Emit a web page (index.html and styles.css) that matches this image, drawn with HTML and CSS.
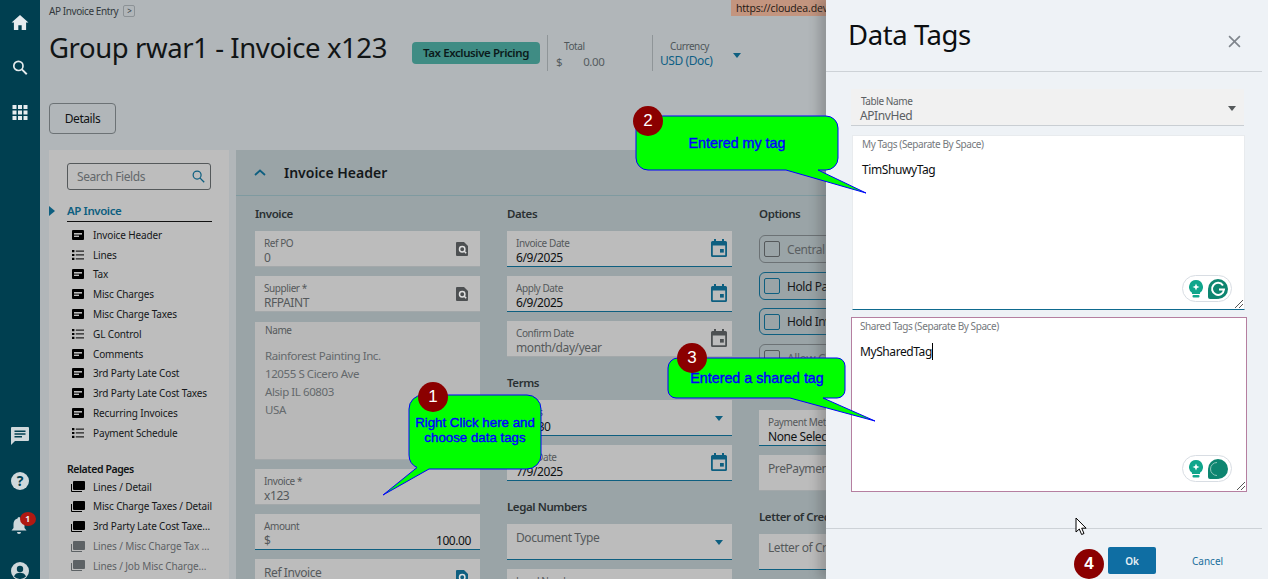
FILE: index.html
```html
<!DOCTYPE html>
<html lang="en">
<head>
<meta charset="utf-8">
<title>AP Invoice Entry</title>
<link rel="stylesheet" href="styles.css">
</head>
<body>
<svg class="sprite" width="0" height="0" aria-hidden="true">
  <symbol id="i-card" viewBox="0 0 12 10"><rect width="12" height="10" rx="1" fill="#000"/><rect x="2" y="3" width="8" height="1.6" fill="#bdbdbd"/><rect x="2" y="5.6" width="5" height="1.4" fill="#bdbdbd"/></symbol>
  <symbol id="i-list" viewBox="0 0 12 10"><path d="M0 0h2.4v2.2H0zM0 3.9h2.4v2.2H0zM0 7.8h2.4V10H0z" fill="#000"/><path d="M3.800 .4H12v1.300H3.800zM3.800 4.300H12v1.300H3.800zM3.800 8.200H12v1.300H3.800z" fill="#222"/></symbol>
  <symbol id="i-stack" viewBox="0 0 14 11"><path d="M0 3h1v7h10v1H1a1 1 0 0 1-1-1z" fill="currentColor"/><rect x="2" y="0" width="12" height="9" rx="1" fill="currentColor"/></symbol>
  <symbol id="i-lookup" viewBox="0 0 12 14"><path d="M0 1a1 1 0 0 1 1-1h7l4 4v9a1 1 0 0 1-1 1H1a1 1 0 0 1-1-1z" fill="currentColor"/><circle cx="6.200" cy="7.200" r="2.700" fill="none" stroke="#e0e0e0" stroke-width="1.500"/><path d="M8 9l2.200 2.200" stroke="#e0e0e0" stroke-width="1.500"/></symbol>
  <symbol id="i-cal" viewBox="0 0 16 18"><path d="M3 0h2v2h6V0h2v2h1.500A1.500 1.500 0 0 1 16 3.500v13a1.500 1.500 0 0 1-1.500 1.500h-13A1.500 1.500 0 0 1 0 16.500v-13A1.500 1.500 0 0 1 1.500 2H3zM1.800 6.500v9.700h12.400V6.500z" fill="currentColor"/><rect x="9" y="10" width="3.800" height="3.600" fill="currentColor"/></symbol>
  <symbol id="i-bulb" viewBox="0 0 14 18"><path d="M7 0a7 7 0 0 1 4 12.700V14H3v-1.300A7 7 0 0 1 7 0z" fill="#10a68c"/><path d="M7 3.500l1 2.500 2.500 1-2.500 1-1 2.500-1-2.500-2.500-1 2.500-1z" fill="#fff"/><rect x="3.500" y="15" width="7" height="2.400" rx="1" fill="#10a68c"/></symbol>
</svg>

<div class="app">
  <nav class="rail">
    <div class="rail-top">
      <svg class="rail-icon rail-icon-sm" viewBox="0 0 18 16"><path d="M9 0L0 8h2.500v8h4.700v-5.200h3.600V16h4.700V8H18z" fill="#e6ecee"/></svg>
      <svg class="rail-icon rail-icon-sm" viewBox="0 0 16 16"><circle cx="6.300" cy="6.300" r="4.900" fill="none" stroke="#e6ecee" stroke-width="1.800"/><path d="M10 10l5.200 5.200" stroke="#e6ecee" stroke-width="2"/></svg>
      <svg class="rail-icon rail-icon-sm" viewBox="0 0 15 15"><path d="M0 0h4v4H0zM5.500 0h4v4h-4zM11 0h4v4h-4zM0 5.500h4v4H0zM5.500 5.500h4v4h-4zM11 5.500h4v4h-4zM0 11h4v4H0zM5.500 11h4v4h-4zM11 11h4v4h-4z" fill="#e6ecee"/></svg>
    </div>
    <div class="rail-bottom">
      <svg class="rail-icon" viewBox="0 0 18 18"><path d="M1 0h16a1 1 0 0 1 1 1v12a1 1 0 0 1-1 1H4l-4 4V1a1 1 0 0 1 1-1z" fill="#cfd8db"/><path d="M3.500 3.500h11v1.500h-11zM3.500 6.300h11v1.500h-11zM3.500 9.100h7.500v1.500h-7.500z" fill="#003f50"/></svg>
      <svg class="rail-icon" viewBox="0 0 18 18"><circle cx="9" cy="9" r="9" fill="#cfd8db"/><text x="9" y="14" class="help-mark">?</text></svg>
      <div class="bell">
        <svg class="rail-icon" viewBox="0 0 16 18"><path d="M8 0a1.500 1.500 0 0 1 1.500 1.500c2.700.7 4 3 4 5.500v4l2 2.500H.500l2-2.500V7c0-2.500 1.300-4.800 4-5.500A1.500 1.500 0 0 1 8 0zM6 15h4a2 2 0 0 1-4 0z" fill="#cfd8db"/></svg>
        <span class="bell-count">1</span>
      </div>
      <svg class="rail-icon" viewBox="0 0 18 18"><circle cx="9" cy="9" r="9" fill="#cfd8db"/><circle cx="9" cy="7" r="3.200" fill="#003f50"/><path d="M3 14.500c1-2.800 3.300-3.800 6-3.800s5 1 6 3.800A8 8 0 0 1 9 17a8 8 0 0 1-6-2.500z" fill="#003f50"/></svg>
    </div>
  </nav>

  <main class="page">
    <div class="crumbs"><span>AP Invoice Entry</span><span class="crumb-btn">&gt;</span></div>
    <header class="head">
      <h1 class="title">Group rwar1 - Invoice x123</h1>
      <span class="pill">Tax Exclusive Pricing</span>
      <div class="stat stat-total">
        <span class="stat-label">Total</span>
        <span class="stat-value"><span>$</span><span>0.00</span></span>
      </div>
      <div class="stat stat-currency">
        <span class="stat-label">Currency</span>
        <span class="stat-link">USD (Doc)</span>
        <span class="caret caret-head"></span>
      </div>
    </header>
    <div class="actions"><button class="details">Details</button></div>

    <div class="workspace">
      <aside class="side">
        <div class="search"><span>Search Fields</span>
          <svg class="search-icon" viewBox="0 0 16 16"><circle cx="6.300" cy="6.300" r="4.900" fill="none" stroke="#0e5f80" stroke-width="1.500"/><path d="M10 10l5 5" stroke="#0e5f80" stroke-width="1.700"/></svg>
        </div>
        <div class="side-head"><span class="side-arrow"></span>AP Invoice</div>
        <ul class="side-list">
          <li><svg class="n-ic"><use href="#i-card"/></svg>Invoice Header</li>
          <li><svg class="n-ic"><use href="#i-list"/></svg>Lines</li>
          <li><svg class="n-ic"><use href="#i-card"/></svg>Tax</li>
          <li><svg class="n-ic"><use href="#i-card"/></svg>Misc Charges</li>
          <li><svg class="n-ic"><use href="#i-card"/></svg>Misc Charge Taxes</li>
          <li><svg class="n-ic"><use href="#i-list"/></svg>GL Control</li>
          <li><svg class="n-ic"><use href="#i-card"/></svg>Comments</li>
          <li><svg class="n-ic"><use href="#i-card"/></svg>3rd Party Late Cost</li>
          <li><svg class="n-ic"><use href="#i-card"/></svg>3rd Party Late Cost Taxes</li>
          <li><svg class="n-ic"><use href="#i-card"/></svg>Recurring Invoices</li>
          <li><svg class="n-ic"><use href="#i-list"/></svg>Payment Schedule</li>
        </ul>
        <div class="related">Related Pages</div>
        <ul class="side-list">
          <li><svg class="n-ic n-stack"><use href="#i-stack"/></svg>Lines / Detail</li>
          <li><svg class="n-ic n-stack"><use href="#i-stack"/></svg>Misc Charge Taxes / Detail</li>
          <li><svg class="n-ic n-stack"><use href="#i-stack"/></svg>3rd Party Late Cost Taxe…</li>
          <li class="muted"><svg class="n-ic n-stack"><use href="#i-stack"/></svg>Lines / Misc Charge Tax …</li>
          <li class="muted"><svg class="n-ic n-stack"><use href="#i-stack"/></svg>Lines / Job Misc Charge…</li>
        </ul>
      </aside>

      <section class="panel">
        <div class="panel-head">
          <svg class="chev" viewBox="0 0 12 7"><path d="M1 6l5-4.500L11 6" fill="none" stroke="#0e5f80" stroke-width="1.800"/></svg>
          <h2>Invoice Header</h2>
        </div>
        <div class="form">
          <div class="col">
            <h3>Invoice</h3>
            <div class="field"><label>Ref PO</label><div class="val dim">0</div><svg class="f-ic"><use href="#i-lookup"/></svg></div>
            <div class="field"><label>Supplier *</label><div class="val dim">RFPAINT</div><svg class="f-ic"><use href="#i-lookup"/></svg></div>
            <div class="field field-name">
              <label>Name</label>
              <div class="addr">Rainforest Painting Inc.<br>12055 S Cicero Ave<br>Alsip IL 60803<br>USA</div>
            </div>
            <div class="field"><label>Invoice *</label><div class="val dim">x123</div></div>
            <div class="field live"><label>Amount</label><div class="val amount"><span class="dim">$</span><span>100.00</span></div></div>
            <div class="field"><div class="ph">Ref Invoice</div><svg class="f-ic f-ic-live"><use href="#i-lookup"/></svg></div>
          </div>
          <div class="col">
            <h3>Dates</h3>
            <div class="field live"><label>Invoice Date</label><div class="val">6/9/2025</div><svg class="f-cal"><use href="#i-cal"/></svg></div>
            <div class="field live"><label>Apply Date</label><div class="val">6/9/2025</div><svg class="f-cal"><use href="#i-cal"/></svg></div>
            <div class="field"><label>Confirm Date</label><div class="val dim">month/day/year</div><svg class="f-cal f-cal-off"><use href="#i-cal"/></svg></div>
            <h3 class="sec">Terms</h3>
            <div class="field live"><label>Terms</label><div class="val">Net 30</div><span class="caret caret-field"></span></div>
            <div class="field live"><label>Due Date</label><div class="val">7/9/2025</div><svg class="f-cal"><use href="#i-cal"/></svg></div>
            <h3 class="sec">Legal Numbers</h3>
            <div class="field live"><div class="ph">Document Type</div><span class="caret caret-field"></span></div>
            <div class="field"><label>Legal Number</label></div>
          </div>
          <div class="col">
            <h3>Options</h3>
            <div class="check"><span class="box"></span>Central Collection</div>
            <div class="check on"><span class="box"></span>Hold Payment</div>
            <div class="check on"><span class="box"></span>Hold Invoice</div>
            <div class="check"><span class="box"></span>Allow Changes</div>
            <div class="field live pay"><label>Payment Method</label><div class="val">None Selected</div></div>
            <div class="field"><div class="ph">PrePayment</div></div>
            <h3 class="sec">Letter of Credit</h3>
            <div class="field live"><div class="ph">Letter of Credit</div></div>
          </div>
        </div>
      </section>
    </div>
  </main>
</div>

<div class="url-tip">https://cloudea.dev.epicorsaas.com</div>

<aside class="drawer">
  <div class="d-head">
    <h2>Data Tags</h2>
    <svg class="d-close" viewBox="0 0 12 12"><path d="M1 1l10 10M11 1L1 11" stroke="#7f858c" stroke-width="1.500"/></svg>
  </div>
  <div class="d-body">
    <div class="d-select"><label>Table Name</label><div>APInvHed</div><span class="caret caret-drawer"></span></div>
    <div class="d-area d-mine">
      <label>My Tags (Separate By Space)</label>
      <div class="d-text">TimShuwyTag</div>
      <div class="gram">
        <svg class="g-bulb"><use href="#i-bulb"/></svg>
        <svg class="g-mark" viewBox="0 0 20 20"><circle cx="10" cy="10" r="10" fill="#0d8570"/><path d="M10 20H2a2 2 0 0 1-2-2v-8z" fill="#0d8570"/><path d="M15 6.500A6 6 0 1 0 16 10.500h-5" fill="none" stroke="#fff" stroke-width="2"/></svg>
      </div>
      <span class="grip"></span>
    </div>
    <div class="d-area d-shared">
      <label>Shared Tags (Separate By Space)</label>
      <div class="d-text"><span class="d-caret">MySharedTag</span></div>
      <div class="gram">
        <svg class="g-bulb"><use href="#i-bulb"/></svg>
        <svg class="g-mark" viewBox="0 0 20 20"><circle cx="10" cy="10" r="10" fill="#0d8570"/><path d="M10 20H2a2 2 0 0 1-2-2v-8z" fill="#0d8570"/><path d="M9 3.500a6.500 6.500 0 0 0 0 13" fill="none" stroke="#8fc7bb" stroke-width="1"/></svg>
      </div>
      <span class="grip"></span>
    </div>
  </div>
  <div class="d-foot">
    <button class="ok">Ok</button>
    <button class="cancel">Cancel</button>
  </div>
</aside>

<svg class="bubble-art" viewBox="0 0 1268 579" width="1268" height="579" aria-hidden="true">
  <path class="bubble" d="M423 395H527a14 14 0 0 1 14 14V455a14 14 0 0 1-14 14H429L383 495L417 467.500A14 14 0 0 1 409 455V409a14 14 0 0 1 14-14z"/>
  <path class="bubble" d="M648 116H826a12 12 0 0 1 12 12V158a12 12 0 0 1-12 12H818L866 193L786 170H648a12 12 0 0 1-12-12V128a12 12 0 0 1 12-12z"/>
  <path class="bubble" d="M678 358H837a8 8 0 0 1 8 8V390a8 8 0 0 1-8 8H823L875 421L790 398H676a8 8 0 0 1-8-8V368a10 10 0 0 1 10-10z"/>
</svg>
<div class="note note-1">Right Click here and choose data tags</div>
<div class="note note-2">Entered my tag</div>
<div class="note note-3">Entered a shared tag</div>
<span class="step step-1">1</span>
<span class="step step-2">2</span>
<span class="step step-3">3</span>
<span class="step step-4">4</span>
<svg class="pointer" viewBox="0 0 12 19"><path d="M1 1v14l3.300-3 2.300 5.500 2.400-1-2.300-5.300h4.400z" fill="#fff" stroke="#000" stroke-width="1"/></svg>
</body>
</html>
```
FILE: styles.css
```css
* { box-sizing: border-box; }
html, body { margin: 0; padding: 0; height: 579px; overflow: hidden; }
body { font-family: "Noto Sans", sans-serif; letter-spacing: -.026em; color: #0c0f10; background: #b1b6b9; position: relative; width: 1268px; }
ul { list-style: none; margin: 0; padding: 0; }
h1, h2, h3 { margin: 0; font-weight: 400; }
label { display: block; }
button { font-family: inherit; letter-spacing: inherit; }
.sprite { position: absolute; }

.app { display: flex; height: 579px; overflow: hidden; }
.rail { width: 40px; flex: none; background: #003f50; display: flex; flex-direction: column; justify-content: space-between; align-items: center; padding: 15px 0 0; }
.rail-top { display: flex; flex-direction: column; align-items: center; gap: 30px; }
.rail-bottom { display: flex; flex-direction: column; align-items: center; gap: 27px; margin-bottom: -1px; }
.rail-icon { width: 18px; height: 18px; display: block; }
.rail-icon-sm { height: 15px; }
.help-mark { font: 700 14px "Noto Sans", sans-serif; fill: #003f50; text-anchor: middle; }
.bell { position: relative; margin-right: 3px; }
.bell-count { position: absolute; left: 10px; top: -5px; width: 16px; height: 14px; border-radius: 50%; background: #b01912; color: #eee; font-size: 8.500px; font-weight: 700; line-height: 14px; text-align: center; }

.page { flex: 1; min-width: 0; padding-left: 9px; }
.crumbs { display: flex; align-items: center; gap: 5px; height: 21px; font-size: 10px; color: #33393c; }
.crumb-btn { width: 12px; height: 12px; border: 1px solid #8c9296; border-radius: 2px; font-size: 8px; line-height: 10px; text-align: center; }
.head { display: flex; align-items: flex-start; height: 82px; }
.title { font-size: 27.500px; line-height: 40px; color: #111516; width: 363px; flex: none; margin-top: 7px; white-space: nowrap; }
.pill { margin-top: 21px; width: 128px; height: 22px; flex: none; background: #3f8c84; border-radius: 4px; font-size: 11.500px; font-weight: 600; line-height: 22px; text-align: center; color: #0b1a1b; white-space: nowrap; }
.stat { margin-top: 14px; height: 36px; border-left: 1px solid #8f9598; display: flex; flex-direction: column; position: relative; flex: none; }
.stat-total { margin-left: 7px; width: 105px; padding-left: 8px; }
.stat-label { font-size: 10px; line-height: 12px; color: #4f5659; padding-left: 8px; margin-top: 5px; }
.stat-value { display: flex; gap: 21px; font-size: 11.500px; line-height: 16px; color: #555c60; margin-top: 2px; }
.stat-currency { width: 90px; padding-left: 7px; }
.stat-currency .stat-label { padding-left: 10px; }
.stat-link { font-size: 12px; line-height: 16px; color: #0f5f85; margin-top: 1px; white-space: nowrap; }
.caret { position: absolute; width: 0; height: 0; border-left: 4.500px solid transparent; border-right: 4.500px solid transparent; border-top: 5px solid #0e5f80; }
.caret-head { left: 80px; top: 18px; }
.actions { height: 47px; }
.details { width: 67px; height: 31px; background: transparent; border: 1px solid #6c7275; border-radius: 4px; font-size: 12px; color: #0f1214; padding: 0; }

.workspace { display: flex; gap: 7px; height: 429px; overflow: hidden; }
.side { width: 180px; flex: none; background: #bdbdbd; padding: 13px 0 0 18px; position: relative; }
.search { width: 144px; height: 27px; border: 1px solid #55595b; border-radius: 3px; font-size: 12px; line-height: 25px; color: #63686b; padding-left: 9px; position: relative; }
.search-icon { position: absolute; right: 5px; top: 6px; width: 13px; height: 13px; }
.side-head { margin-top: 11px; width: 145px; height: 21px; border-bottom: 1px solid #111; font-size: 11.500px; font-weight: 600; line-height: 20px; color: #0e5f80; position: relative; }
.side-arrow { position: absolute; left: -18px; top: 5px; border-top: 5.500px solid transparent; border-bottom: 5.500px solid transparent; border-left: 6px solid #0e5f80; }
.side-list li { height: 19.800px; display: flex; align-items: center; gap: 9px; font-size: 10px; letter-spacing: -.014em; color: #15181a; white-space: nowrap; padding-left: 5px; }
.side-head + .side-list { margin-top: 3px; }
.side-list .muted { color: #5d6265; }
.n-ic { width: 12px; height: 10px; flex: none; color: #000; }
.n-stack { width: 14px; height: 11px; margin-left: -1px; margin-right: -1px; }
.muted .n-stack { color: #5d6265; }
.related { margin-top: 19px; font-size: 10.500px; font-weight: 600; line-height: 15px; color: #101314; }
.related + .side-list { margin-top: 0; }

.panel { flex: 1; min-width: 0; background: #9aa4a7; overflow: hidden; }
.panel-head { height: 46px; border-bottom: 1px solid #7f9aa0; display: flex; align-items: center; padding-left: 18px; }
.panel-head h2 { font-size: 14px; font-weight: 600; color: #14181a; margin-left: 18px; letter-spacing: 0; }
.chev { width: 12px; height: 7px; }
.form { display: grid; grid-template-columns: 225px 225px 225px; column-gap: 27px; padding: 9px 0 0 19px; }
.col h3 { font-size: 11.500px; font-weight: 600; line-height: 17px; height: 17px; margin: 0 0 9px; color: #2a3032; }
.col h3.sec { margin-top: 17px; }
.field { position: relative; height: 36px; background: #bcbcbc; margin-bottom: 9px; padding: 6px 9px 0; border-bottom: 1px solid #a3a8aa; }
.field.live { border-bottom-color: #0e5f80; }
.field label { font-size: 10px; line-height: 13px; color: #55595b; white-space: nowrap; }
.val { font-size: 12px; line-height: 15px; margin-top: 0; color: #0e1113; white-space: nowrap; }
.val.dim, .dim { color: #55595b; }
.amount { display: flex; justify-content: space-between; }
.ph { font-size: 12px; line-height: 16px; color: #55595b; white-space: nowrap; }
.field-name { height: 138px; background: #b8b8b8; margin-top: 10px; padding: 2px 10px 0; }
.addr { margin-top: 10px; font-size: 11.500px; line-height: 18px; color: #64696c; }
.f-ic { position: absolute; right: 12px; top: 11px; width: 12px; height: 14px; color: #4d5052; }
.f-ic-live { color: #0e5f80; }
.f-cal { position: absolute; right: 5px; top: 8px; width: 16px; height: 18px; color: #0e5f80; }
.f-cal-off { color: #4d5052; }
.caret-field { right: 9px; top: 16px; }

.check { height: 28px; margin-bottom: 8px; border: 1px solid #6c7275; border-radius: 6px; display: flex; align-items: center; gap: 7px; padding-left: 4px; font-size: 12px; color: #5a5f62; white-space: nowrap; }
.col h3 + .check { margin-top: 13px; margin-bottom: 9px; }
.check.on { border-color: #0e5f80; color: #15181a; }
.check.on + .check.on { height: 27px; margin-bottom: 9px; }
.box { width: 16px; height: 16px; border: 1px solid #55595b; border-radius: 2px; flex: none; }
.check.on .box { border-color: #0e5f80; }
.pay { margin-top: 38px; height: 36px; }

.url-tip { position: absolute; left: 731px; top: 0; width: 95px; height: 16px; overflow: hidden; background: #c3957f; font-family: "Open Sans", sans-serif; letter-spacing: -.015em; font-size: 10.500px; line-height: 16px; padding-left: 5px; color: #1c1512; white-space: nowrap; }

.drawer { position: absolute; left: 826px; top: 0; width: 442px; height: 579px; background: #eef2f6; box-shadow: -7px 0 10px rgba(60, 60, 60, .28); }
.d-head { height: 72px; margin-right: 6px; border-bottom: 1px solid #cdd2d7; display: flex; justify-content: space-between; padding: 14px 22px 0 22px; }
.d-head h2 { font-size: 27.500px; line-height: 42px; color: #0b0e10; }
.d-close { width: 13px; height: 13px; margin-top: 21px; margin-right: -1px; }
.d-body { height: 456px; padding: 17px 0 0 25px; display: flex; flex-direction: column; }
.d-select { width: 393px; height: 37px; background: #f1f1f1; border-bottom: 1px solid #c9ced3; padding: 6px 9px 0; position: relative; color: #5b6063; }
.d-select label { font-size: 10px; line-height: 13px; padding-left: 1px; }
.d-select div { font-size: 12px; line-height: 15px; }
.caret-drawer { right: 8px; top: 17px; border-top-color: #55595b; }
.d-area { position: relative; background: #fff; height: 175px; flex: none; }
.d-area label { font-size: 10px; line-height: 14px; color: #75797d; display: block; }
.d-text { font-size: 12px; line-height: 16px; margin-top: 11px; color: #0b0e10; }
.d-mine { width: 393px; margin: 9px 0 0 1px; border: 1px solid #e8ebee; border-bottom: 1px solid #0e6a8f; padding: 1px 9px; }
.d-shared { width: 396px; margin: 7px 0 0 0; border: 1px solid #b57fa0; padding: 1px 8px; }
.d-caret { border-right: 1px solid #000; }
.gram { position: absolute; right: 14px; bottom: 9px; width: 50px; height: 27px; border: 1px solid #d8dde3; border-radius: 14px; background: #fff; display: flex; align-items: center; gap: 5px; padding-left: 6px; }
.d-mine .gram { right: 12px; bottom: 7px; }
.g-bulb { width: 14px; height: 18px; }
.g-mark { width: 20px; height: 20px; }
.grip { position: absolute; right: 1px; bottom: 1px; width: 8px; height: 8px; background: linear-gradient(135deg, transparent 48%, #555 48%, #555 56%, transparent 56%, transparent 70%, #555 70%, #555 78%, transparent 78%); }
.d-foot { margin-right: 6px; border-top: 1px solid #cdd2d7; height: 51px; display: flex; align-items: flex-start; padding: 18px 0 0 282px; }
.ok { width: 48px; height: 27px; background: #0f6ea3; border: 0; border-radius: 2px; color: #e8f0f5; font-size: 10px; font-weight: 600; padding: 0; letter-spacing: 0; }
.cancel { background: none; border: 0; color: #1a6f9c; font-size: 10px; margin-left: 36px; padding: 0; height: 27px; letter-spacing: 0; }

.bubble-art { position: absolute; left: 0; top: 0; pointer-events: none; }
.bubble { fill: #00ff00; stroke: #0000ff; stroke-width: 1px; }
.note { position: absolute; font-family: "Liberation Sans", sans-serif; font-size: 14.300px; line-height: 15px; letter-spacing: 0; color: #0000ff; text-align: center; -webkit-text-stroke: .4px #0000ff; }
.note-1 { left: 410px; top: 415px; width: 130px; font-size: 13.300px; }
.note-2 { left: 636px; top: 136px; width: 202px; }
.note-3 { left: 668px; top: 371px; width: 178px; }
.step { position: absolute; width: 30px; height: 30px; border-radius: 50%; background: #8b0000; color: #fff; font-family: "Liberation Sans", sans-serif; font-size: 17px; line-height: 30px; letter-spacing: 0; text-align: center; }
.step-1 { left: 418px; top: 382px; }
.step-2 { left: 633px; top: 106px; }
.step-3 { left: 677px; top: 343px; }
.step-4 { left: 1074px; top: 549px; font-weight: 700; }
.pointer { position: absolute; left: 1075px; top: 517px; width: 12px; height: 19px; }
```
